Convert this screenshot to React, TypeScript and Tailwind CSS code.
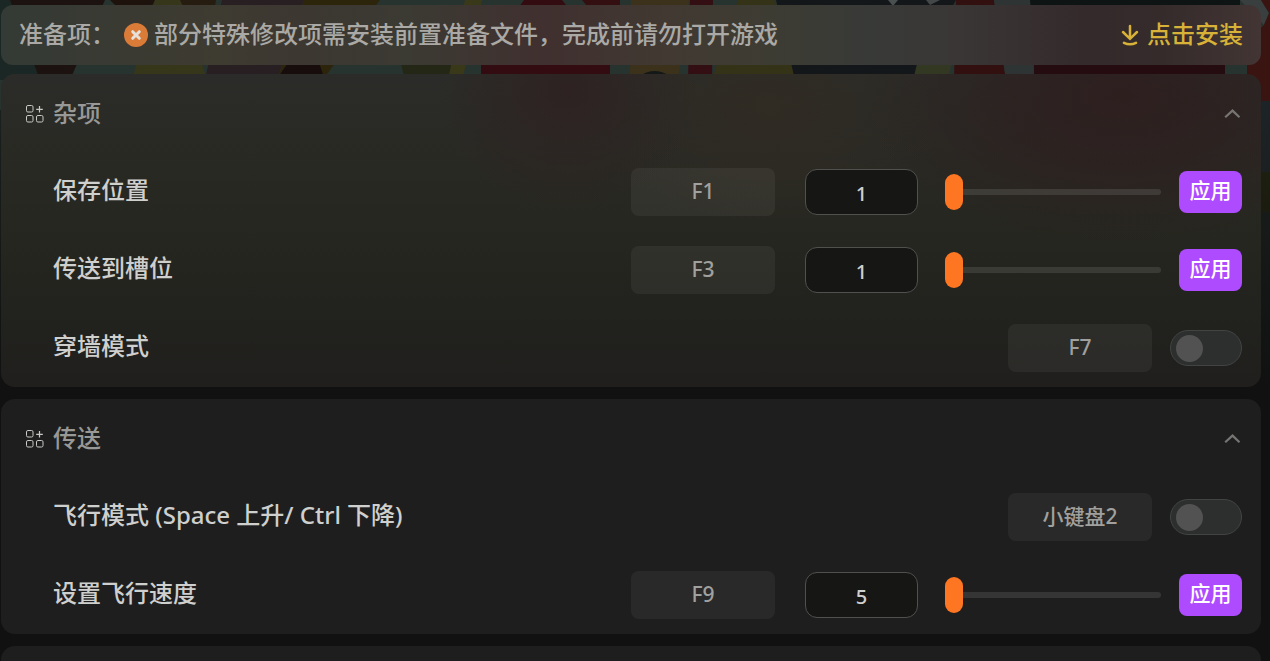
import { useState } from "react";
import type { ReactNode } from "react";

type Row = {
  id: string;
  label: string;
  hotkey: string;
  value?: number;
};

type Group = {
  title: string;
  surface: string;
  rows: Row[];
};

const groups: Group[] = [
  {
    title: "杂项",
    surface:
      "bg-[radial-gradient(ellipse_130px_120px_at_45%_5%,#2e2222_0%,transparent_100%),radial-gradient(ellipse_260px_150px_at_89%_7%,#2e1f1f_0%,#2d1f1f99_50%,transparent_100%),radial-gradient(ellipse_180px_120px_at_61%_10%,#302b23_0%,transparent_100%),linear-gradient(to_bottom,#2b2c29_0%,#292923_30%,#25261f_55%,#21211e_82%,#201f1d_100%)]",
    rows: [
      { id: "save-position", label: "保存位置", hotkey: "F1", value: 1 },
      { id: "teleport-slot", label: "传送到槽位", hotkey: "F3", value: 1 },
      { id: "noclip", label: "穿墙模式", hotkey: "F7" },
    ],
  },
  {
    title: "传送",
    surface: "bg-[#1e1e1e]",
    rows: [
      { id: "fly", label: "飞行模式 (Space 上升/ Ctrl 下降)", hotkey: "小键盘2" },
      { id: "fly-speed", label: "设置飞行速度", hotkey: "F9", value: 5 },
    ],
  },
];

function Backdrop() {
  return (
    <svg
      aria-hidden="true"
      className="absolute inset-x-0 top-0 -z-10 h-[400px] w-full opacity-85"
      viewBox="0 0 1270 400"
      preserveAspectRatio="none"
    >
      <defs>
        <linearGradient id="fade" x1="0" y1="0" x2="0" y2="1">
          <stop offset="0" stopColor="#111111" stopOpacity="0" />
          <stop offset="1" stopColor="#111111" />
        </linearGradient>
      </defs>
      <rect width="1270" height="400" fill="#1c2422" />
      <rect width="1270" height="110" fill="#2c3a35" />
      <path d="M0 0H14L40 80H0Z" fill="#1d2b28" />
      <path d="M10 0H105L70 80H40Z" fill="#1f1410" />
      <path d="M110 0H155L140 30Z" fill="#20130c" />
      <path d="M155 0H182L207 80H132Z" fill="#3d3d1c" />
      <path d="M180 0H216L207 60Z" fill="#2c1f10" />
      <path d="M222 0H304L277 80H205Z" fill="#2b2225" />
      <path d="M304 0H380L323 80H277Z" fill="#33280c" />
      <path d="M290 60H318L325 80H276Z" fill="#170d0c" />
      <path d="M400 60H450L462 80H405Z" fill="#292c18" />
      <path d="M465 0H482L462 80H448Z" fill="#41411c" />
      <path d="M524 0H562L610 60V80H481V60Z" fill="#380c10" />
      <path d="M582 0H620V12H592Z" fill="#3b0f12" />
      <path d="M631 0H689L678 80H630Z" fill="#44371c" />
      <path d="M640 76Q654 66 670 76Z" fill="#151b1a" />
      <path d="M690 0H713L712 80H688Z" fill="#3a0f14" />
      <path d="M738 0H774L800 80H712Z" fill="#3b3919" />
      <path d="M776 0H956L912 80H795Z" fill="#15191c" />
      <path d="M888 0H898L893 6Z" fill="#555a5a" />
      <path d="M926 0H940L930 5Z" fill="#4c5152" />
      <path d="M918 60H952L948 80H913Z" fill="#393f27" />
      <path d="M956 0H994L1006 80H954Z" fill="#3a1010" />
      <path d="M994 0H1030L1034 80H1006Z" fill="#343b3b" />
      <path d="M1030 0H1240V40H1034Z" fill="#0e1414" />
      <path d="M1034 40H1225V100H1034Z" fill="#280c10" />
      <path d="M1240 0H1261L1269 13L1264 25Z" fill="#414747" />
      <path d="M1261 0H1270V101H1247V40L1264 25L1269 13Z" fill="#421512" />
      <rect x="1255" y="101" width="15" height="74" fill="#20282b" />
      <rect x="1255" y="172" width="15" height="40" fill="#24270f" />
      <rect y="101" width="1270" height="299" fill="url(#fade)" />
    </svg>
  );
}

function ErrorBadge() {
  return (
    <svg aria-hidden="true" className="size-6 shrink-0" viewBox="0 0 24 24">
      <circle cx="12" cy="12" r="12" fill="#db7b38" />
      <path
        d="M8.7 8.7L15.3 15.3M15.3 8.7L8.7 15.3"
        stroke="#e6e0da"
        strokeWidth="3"
        strokeLinecap="round"
      />
    </svg>
  );
}

function DownloadIcon() {
  return (
    <svg
      aria-hidden="true"
      className="h-6 w-[18px] shrink-0"
      viewBox="0 0 18 24"
      fill="none"
      stroke="currentColor"
      strokeWidth="2.5"
      strokeLinecap="round"
    >
      <path d="M9 3V15M2 9L9 15.8L16 9" />
      <path d="M3 19.8Q9 22.8 15 19.8" />
    </svg>
  );
}

function GroupIcon() {
  return (
    <svg
      aria-hidden="true"
      className="size-[18px] shrink-0"
      viewBox="0 0 18 18"
      fill="none"
      stroke="#c9c9c7"
      strokeWidth="1"
    >
      <rect x="0.5" y="0.5" width="6.5" height="6.5" rx="1.4" />
      <rect x="0.5" y="10.5" width="6.5" height="6.5" rx="1.4" />
      <rect x="10.5" y="10.5" width="6.5" height="6.5" rx="1.4" />
      <path d="M13.5 1V7.5M10.2 4.3H16.8" strokeWidth="1.2" />
    </svg>
  );
}

function Chevron({ open }: { open: boolean }) {
  return (
    <svg
      aria-hidden="true"
      className={open ? "h-2.5 w-4" : "h-2.5 w-4 rotate-180"}
      viewBox="0 0 16 10"
      fill="none"
      stroke="#777574"
      strokeWidth="2.2"
    >
      <path d="M1.2 8.2L8.5 1.6L15.5 8.2" />
    </svg>
  );
}

function Hotkey({ children }: { children: ReactNode }) {
  return (
    <button
      type="button"
      className="h-12 w-36 rounded-lg bg-white/5 pb-0.5 text-[21px] leading-7 font-medium text-[#a0a09e]"
    >
      {children}
    </button>
  );
}

function ValueControls({ row, initial }: { row: Row; initial: number }) {
  const [value, setValue] = useState(initial);

  return (
    <>
      <input
        type="text"
        inputMode="numeric"
        aria-labelledby={row.id}
        value={value}
        onChange={(e) => setValue(Number(e.target.value) || initial)}
        className="ml-[30px] h-[46px] w-[113px] rounded-xl border border-[#50504f] bg-[#161615] pt-0.5 text-center text-xl leading-7 font-medium text-[#cfcfcf] outline-none"
      />
      <input
        type="range"
        aria-labelledby={row.id}
        min={initial}
        max={100}
        value={value}
        onChange={(e) => setValue(Number(e.target.value))}
        className="ml-[27px] h-9 w-[216px] appearance-none bg-transparent [&::-webkit-slider-runnable-track]:h-1.5 [&::-webkit-slider-runnable-track]:rounded-full [&::-webkit-slider-runnable-track]:bg-white/10 [&::-webkit-slider-thumb]:-mt-[15px] [&::-webkit-slider-thumb]:h-9 [&::-webkit-slider-thumb]:w-[18px] [&::-webkit-slider-thumb]:appearance-none [&::-webkit-slider-thumb]:rounded-full [&::-webkit-slider-thumb]:bg-[#ff7622]"
      />
      <button
        type="button"
        className="ml-[18px] h-[42px] w-[63px] rounded-lg bg-[#ae4bff] pb-1 text-[21px] leading-7 font-medium text-white"
      >
        应用
      </button>
    </>
  );
}

function SettingRow({ row }: { row: Row }) {
  return (
    <div className="flex h-[78px] items-center pr-[19px] pl-[52px]">
      <label
        id={row.id}
        htmlFor={row.value === undefined ? `${row.id}-switch` : undefined}
        className="flex-1 pb-1 text-2xl font-medium text-[#cfcfcd]"
      >
        {row.label}
      </label>
      <Hotkey>{row.hotkey}</Hotkey>
      {row.value === undefined ? (
        <input
          id={`${row.id}-switch`}
          type="checkbox"
          role="switch"
          className="ml-[18px] flex h-9 w-[72px] appearance-none items-center rounded-full border border-[#424444] bg-[#2d2e2e] px-[5px] before:size-[27px] before:rounded-full before:bg-[#525252] checked:justify-end checked:before:bg-[#ff7622]"
        />
      ) : (
        <ValueControls row={row} initial={row.value} />
      )}
    </div>
  );
}

function SettingGroup({ group }: { group: Group }) {
  const [open, setOpen] = useState(true);

  return (
    <section className={`rounded-[14px] ${group.surface}`}>
      <h2>
        <button
          type="button"
          aria-expanded={open}
          onClick={() => setOpen(!open)}
          className="flex h-[79px] w-full items-center pr-[21px] pl-[25px] text-[#989896]"
        >
          <GroupIcon />
          <span className="ml-[9px] flex-1 pb-0.5 text-left text-2xl font-medium">
            {group.title}
          </span>
          <Chevron open={open} />
        </button>
      </h2>
      {open && group.rows.map((row) => <SettingRow key={row.id} row={row} />)}
    </section>
  );
}

export default function App() {
  return (
    <main className="relative isolate flex h-screen flex-col overflow-hidden bg-[#111111] pt-[5px] pr-[9px] pl-px font-['Noto_Sans','Noto_Sans_CJK_SC',sans-serif]">
      <Backdrop />
      <header className="flex h-[60px] shrink-0 items-center rounded-xl bg-[linear-gradient(to_right,#343a35_0%,#3a3a32_10%,#3e3b31_17%,#3c3731_24%,#3b3a33_32%,#40302f_43%,#413932_53%,#3d3c33_61%,#383a38_69%,#3a3636_76%,#342a2b_86%,#352b2b_92%,#423534_100%)] px-[18px] text-2xl font-medium text-[#aaa9a5]">
        <span className="pb-0.5">准备项：</span>
        <span className="ml-[9px] flex flex-1 items-center gap-1.5">
          <ErrorBadge />
          <span className="pb-0.5">
            部分特殊修改项需安装前置准备文件，完成前请勿打开游戏
          </span>
        </span>
        <button type="button" className="flex items-center gap-2 text-[#d8b238]">
          <DownloadIcon />
          <span className="pb-0.5">点击安装</span>
        </button>
      </header>
      <div className="mt-[9px] flex flex-1 flex-col gap-3">
        {groups.map((group) => (
          <SettingGroup key={group.title} group={group} />
        ))}
        <section className="min-h-20 flex-1 rounded-[14px] bg-[#1e1e1e]" />
      </div>
    </main>
  );
}
